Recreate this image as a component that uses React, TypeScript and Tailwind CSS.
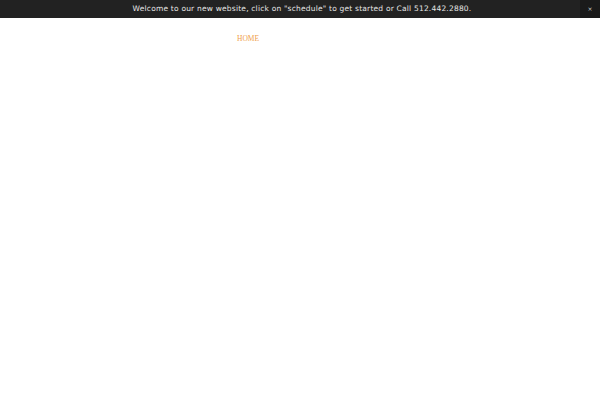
export default function App() {
  return (
    <div className="min-h-[400px] bg-white">
      <div className="relative flex h-[18px] items-center justify-center bg-[#222222]">
        <p className="pl-[4px] text-[7.5px] leading-none tracking-[0.2px] text-[#e6e6e6]" style={{ fontFamily: '"DejaVu Sans", sans-serif' }}>
          Welcome to our new website, click on "schedule" to get started or Call 512.442.2880.
        </p>
        <button className="absolute right-0 top-0 flex h-[18px] w-[20px] items-center justify-center bg-[#1a1a1a] text-[6px] leading-none text-[#cccccc]" style={{ fontFamily: '"DejaVu Sans", sans-serif' }}>
          ×
        </button>
      </div>
      <nav className="flex pl-[237px] pt-[16px]">
        <a className="text-[7.5px] leading-[9px] text-[#f0a04b]" style={{ fontFamily: '"Liberation Serif", serif' }}>HOME</a>
      </nav>
    </div>
  );
}
